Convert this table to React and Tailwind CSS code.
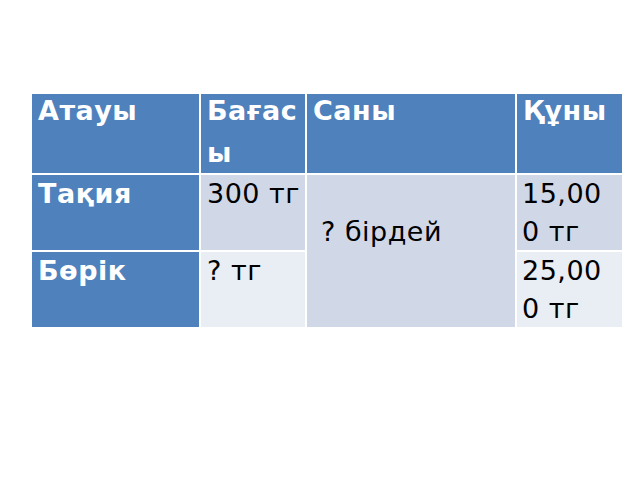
import React from "react";

const font = { fontFamily: '"DejaVu Sans", "Noto Sans", sans-serif' };

export default function App() {
  return (
    <div className="w-[640px] h-[480px] bg-white overflow-hidden" style={font}>
      <div className="pt-[94px] pl-[32px]">
        <div className="grid grid-cols-[167px_104px_208px_105px] grid-rows-[79px_75px_75px] gap-[2px] w-[590px] text-[27px] leading-[38px] tracking-[0.5px]">
          {/* header row */}
          <div className="bg-[#4f81bd] text-white font-bold pl-[6px] leading-[34px]">Атауы</div>
          <div className="bg-[#4f81bd] text-white font-bold pl-[6px] leading-[34px]">
            <span className="block">Бағас</span>
            <span className="block mt-[8px]">ы</span>
          </div>
          <div className="bg-[#4f81bd] text-white font-bold pl-[6px] leading-[34px]">Саны</div>
          <div className="bg-[#4f81bd] text-white font-bold pl-[6px] leading-[34px]">Құны</div>

          {/* row 1 */}
          <div className="bg-[#4f81bd] text-white font-bold pl-[6px]">Тақия</div>
          <div className="bg-[#d0d8e8] text-black pl-[6px]">300 тг</div>
          <div className="row-span-2 bg-[#d0d8e8] text-black pl-[14px]">
            <span className="block">&nbsp;</span>
            <span className="block">? бірдей</span>
          </div>
          <div className="bg-[#d0d8e8] text-black pl-[5px]">
            <span className="block">15,00</span>
            <span className="block">0 тг</span>
          </div>

          {/* row 2 */}
          <div className="bg-[#4f81bd] text-white font-bold pl-[6px]">Бөрік</div>
          <div className="bg-[#e9edf4] text-black pl-[6px]">? тг</div>
          <div className="bg-[#e9edf4] text-black pl-[5px]">
            <span className="block">25,00</span>
            <span className="block">0 тг</span>
          </div>
        </div>
      </div>
    </div>
  );
}
